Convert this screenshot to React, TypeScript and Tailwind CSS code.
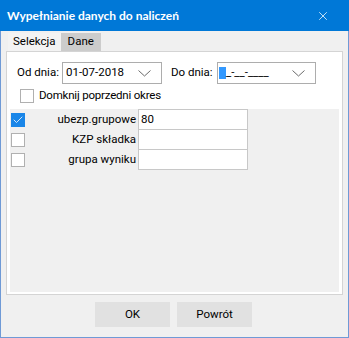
import { Check, X } from "lucide-react";

function Chevron() {
  return (
    <svg width="13" height="7" viewBox="0 0 13 7" className="shrink-0">
      <path d="M0.5 0.5 L6.5 6 L12.5 0.5" fill="none" stroke="#6a6a6a" strokeWidth="1" />
    </svg>
  );
}

function Box({ checked }: { checked?: boolean }) {
  if (checked) {
    return (
      <div className="w-[14px] h-[14px] bg-[#1a86e8] flex items-center justify-center">
        <Check size={12} strokeWidth={1.6} color="#fff" />
      </div>
    );
  }
  return <div className="w-[14px] h-[14px] bg-white border border-[#b0b0b0]" />;
}

const rows = [
  { label: "ubezp.grupowe", value: "80", checked: true },
  { label: "KZP składka", value: "", checked: false },
  { label: "grupa wyniku", value: "", checked: false },
];

export default function App() {
  return (
    <div
      className="w-[349px] h-[338px] bg-[#f0f0f0] border-x border-b border-[#6f9ad6] flex flex-col text-[11.5px] text-black whitespace-nowrap"
      style={{ fontFamily: 'Roboto, Lato, sans-serif' }}
    >
      {/* Title bar */}
      <div className="h-[31px] bg-[#0078d7] -mx-px flex items-center justify-between pl-[7px] pr-[19px] shrink-0">
        <span className="text-white font-bold text-[12px]" style={{ fontFamily: 'Lato, sans-serif' }}>
          Wypełnianie danych do naliczeń
        </span>
        <X size={14} strokeWidth={1.3} color="#fff" />
      </div>

      {/* Tabs */}
      <div className="flex pl-[7px] pt-[2px] h-[20px] shrink-0">
        <div className="px-[5px] bg-[#f3f3f3] flex items-center">Selekcja</div>
        <div className="px-[7px] bg-[#cccccc] flex items-center">Dane</div>
      </div>

      {/* Panel */}
      <div className="mx-[5px] h-[244px] border border-[#d4d4d4] bg-white flex flex-col px-[3px] pb-[2px] shrink-0">
        <div className="h-[57px] shrink-0 pl-[6px] pt-[10px]">
          <div className="flex items-center h-[22px]">
            <span className="w-[46px] pl-px">Od dnia:</span>
            <div className="w-[100px] h-[22px] border border-[#adadad] flex items-center justify-between pl-[3px] pr-[10px]">
              <span>01-07-2018</span>
              <Chevron />
            </div>
            <span className="ml-[9px] w-[46px]">Do dnia:</span>
            <div className="w-[99px] h-[22px] border border-[#adadad] flex items-center justify-between pl-[1px] pr-[10px]">
              <span className="flex items-center">
                <span className="inline-block w-[7px] h-[12px] bg-[#3399ff]" />
                <span>_-__-____</span>
              </span>
              <Chevron />
            </div>
          </div>
          <div className="flex items-center mt-[3px] pl-[4px] gap-[5px]">
            <Box />
            <span className="tracking-[-0.2px]">Domknij poprzedni okres</span>
          </div>
        </div>

        <div className="flex-1 bg-[#f0f0f0] flex flex-col">
          {rows.map((r, i) => (
            <div key={r.label} className={`flex h-[21px] items-center ${i > 0 ? "-mt-px" : ""}`}>
              <div className="w-[128px] pl-px flex items-center">
                <Box checked={r.checked} />
                <span className="flex-1 text-right pr-[2px]">{r.label}</span>
              </div>
              <div className="w-[110px] h-[21px] bg-white border border-[#c8c8c8] flex items-center pl-[2px]">
                {r.value}
              </div>
            </div>
          ))}
        </div>
      </div>

      {/* Buttons */}
      <div className="flex justify-center gap-[7px] mt-[7px] pr-[2px]">
        <button className="w-[75px] h-[25px] bg-[#e1e1e1]">OK</button>
        <button className="w-[75px] h-[25px] bg-[#e1e1e1]">Powrót</button>
      </div>
    </div>
  );
}
